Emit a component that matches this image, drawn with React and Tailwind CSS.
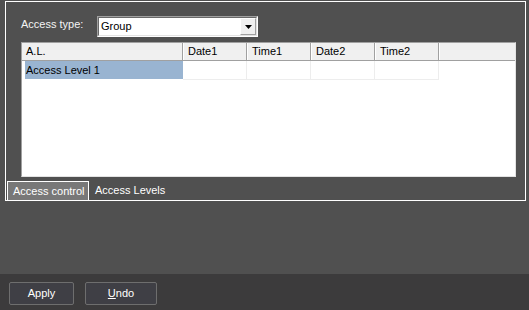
export default function App() {
  const cols = ['Date1', 'Time1', 'Date2', 'Time2']

  return (
    <div className="w-[529px] h-[310px] bg-[#505050] flex flex-col text-[11px] text-white font-['Liberation_Sans',Arial,sans-serif]">
      {/* Tab control */}
      <div className="h-[274px] pt-px pl-[5px] pr-[3px]">
        <div className="h-[200px] border border-white flex flex-col">
          <div className="flex-1 flex flex-col pl-[15px] pr-[8px] pt-[14px] pb-[4px]">
            {/* Access type */}
            <div className="flex items-center h-[21px]">
              <span className="w-[76px] -mt-[4px] text-[#f4f4f4]">Access type:</span>
              <div className="w-[161px] h-[21px] border border-t-[#a0a0a0] border-l-[#a0a0a0] border-r-white border-b-white">
                <div className="h-full border border-t-[#696969] border-l-[#696969] border-r-[#e3e3e3] border-b-[#e3e3e3] bg-white flex items-center">
                  <span className="flex-1 pl-[2px] text-black">Group</span>
                  <div className="w-[16px] h-full bg-[#f0f0f0] border border-t-white border-l-white border-r-[#a0a0a0] border-b-[#a0a0a0] flex items-center justify-center">
                    <svg width="7" height="4" viewBox="0 0 7 4">
                      <path d="M0 0h7L3.5 4z" fill="#000" />
                    </svg>
                  </div>
                </div>
              </div>
            </div>

            {/* List */}
            <div className="mt-[5px] h-[135px] w-[495px] bg-white border border-[#a0a0a0] border-r-[#e3e3e3] border-b-[#e3e3e3] flex flex-col">
              <div className="h-[18px] flex bg-[#f0f0f0] border-b border-[#a0a0a0] text-black">
                <div className="w-[161px] pl-[4px] flex items-center border-r border-[#a0a0a0]">A.L.</div>
                {cols.map(c => (
                  <div key={c} className="w-[64px] pl-[5px] flex items-center border-r border-[#a0a0a0] shadow-[inset_1px_0_0_#fff]">{c}</div>
                ))}
                <div className="flex-1 shadow-[inset_1px_0_0_#fff]" />
              </div>
              <div className="h-[19px] flex text-black">
                <div className="w-[161px] pl-[3px] pb-px">
                  <div className="h-full bg-[#99b4d1] pl-px flex items-center">Access Level 1</div>
                </div>
                {cols.map(c => (
                  <div key={c} className="w-[64px] border-r border-b border-[#ededed]" />
                ))}
              </div>
            </div>
          </div>

          {/* Tabs */}
          <div className="h-[19px] flex">
            <div className="ml-px w-[82px] bg-[#787878] border-t border-l border-r border-white pl-[5px] flex items-center">Access control</div>
            <div className="pl-[6px] flex items-center">Access Levels</div>
          </div>
        </div>
      </div>

      {/* Buttons */}
      <div className="h-[36px] bg-[#3c3b3c] flex items-start pt-[8px] pl-[9px] gap-[11px]">
        <button className="w-[65px] h-[23px] bg-[#3f3f45] border border-[#6e6e6e] rounded-[2px] text-white text-[11px]">Apply</button>
        <button className="w-[72px] h-[23px] bg-[#3f3f45] border border-[#6e6e6e] rounded-[2px] text-white text-[11px]">
          <span className="underline">U</span>ndo
        </button>
      </div>
    </div>
  )
}
